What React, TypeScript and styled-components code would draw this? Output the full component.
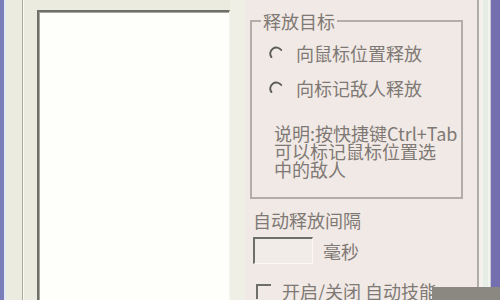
import styled, { createGlobalStyle } from 'styled-components';

const GlobalStyle = createGlobalStyle`
  html, body {
    margin: 0;
    padding: 0;
    background: #f1e9e5;
  }
`;

export default function App() {
  return (
    <>
      <GlobalStyle />
      <Window>
        <FrameLeft />
        <LeftPanel>
          <Ridge />
          <ListBox />
          <ListGap />
        </LeftPanel>
        <RightPanel>
          <GroupBox>
            <Legend>释放目标</Legend>
            <GroupBody>
              <RadioRow>
                <RadioIcon />
                <Label>向鼠标位置释放</Label>
              </RadioRow>
              <RadioRow>
                <RadioIcon />
                <Label>向标记敌人释放</Label>
              </RadioRow>
              <Note>
                说明:按快捷键Ctrl+Tab
                <br />
                可以标记鼠标位置选
                <br />
                中的敌人
              </Note>
            </GroupBody>
          </GroupBox>
          <Caption>自动释放间隔</Caption>
          <IntervalRow>
            <NumberBox />
            <Label>毫秒</Label>
          </IntervalRow>
          <CheckRow>
            <CheckBox />
            <Label>开启/关闭 自动技能</Label>
          </CheckRow>
        </RightPanel>
        <FrameRight />
        <Watermark />
      </Window>
    </>
  );
}

function RadioIcon() {
  return (
    <RadioSvg width="14" height="14" viewBox="0 0 14 14">
      <path
        d="M2.4 11.1 A6 6 0 1 1 12.2 4"
        fill="none"
        stroke="#5c5c58"
        strokeWidth="1.9"
        strokeLinecap="round"
      />
    </RadioSvg>
  );
}

const Window = styled.div`
  position: relative;
  display: flex;
  width: 500px;
  height: 300px;
  overflow: hidden;
  font-family: 'Noto Sans CJK SC', 'Noto Sans', sans-serif;
  font-size: 18px;
  line-height: 18px;
  color: #7f7975;
`;

const FrameLeft = styled.div`
  width: 4px;
  flex: none;
  background: #7a7eb8;
  border-right: 2px solid #e4eaf4;
`;

const LeftPanel = styled.div`
  display: flex;
  width: 239px;
  flex: none;
  background: #ecebdf;
  padding-left: 16px;
  box-sizing: border-box;
`;

const Ridge = styled.div`
  width: 1px;
  flex: none;
  background: #a9a99b;
  border-right: 1px solid #fbfbf4;
  margin-right: 13px;
`;

const ListBox = styled.div`
  width: 193px;
  flex: none;
  margin-top: 10px;
  box-sizing: border-box;
  background: #fefefb;
  border-top: 2px solid #6e6f68;
  border-left: 2px solid #6e6f68;
  border-right: 1px solid #f6f6ee;
  box-shadow: inset 1px 1px 0 #a8a89e;
`;

const ListGap = styled.div`
  flex: 1;
  background: #efefe6;
`;

const RightPanel = styled.div`
  flex: 1;
  display: flex;
  flex-direction: column;
  align-items: flex-start;
  padding: 12px 0 0 5px;
  background: #f1e9e5;
`;

const GroupBox = styled.fieldset`
  margin: 0;
  padding: 0;
  min-width: 0;
  width: 213px;
  height: 198px;
  box-sizing: border-box;
  border: 2px solid #b3aca8;
`;

const Legend = styled.legend`
  margin-left: 9px;
  padding: 0 2px;
  line-height: 18px;
`;

const GroupBody = styled.div`
  display: flex;
  flex-direction: column;
  padding: 14px 0 0 17px;
`;

const RadioRow = styled.div`
  display: flex;
  align-items: center;
  height: 18px;
  margin-bottom: 17px;
`;

const RadioSvg = styled.svg`
  flex: none;
  margin-right: 13px;
`;

const Label = styled.span`
  white-space: nowrap;
`;

const Note = styled.div`
  margin: 10px 0 0 5px;
  white-space: nowrap;
`;

const Caption = styled.div`
  margin-top: 12px;
  padding-left: 3px;
`;

const IntervalRow = styled.div`
  display: flex;
  align-items: center;
  margin-top: 8px;
  padding-left: 3px;
`;

const NumberBox = styled.div`
  width: 60px;
  height: 27px;
  box-sizing: border-box;
  margin-right: 10px;
  background: #f2ece8;
  border-top: 2px solid #6e6e6a;
  border-left: 2px solid #6e6e6a;
  border-right: 1px solid #fbf8f6;
  border-bottom: 1px solid #fbf8f6;
`;

const CheckRow = styled.div`
  display: flex;
  align-items: flex-start;
  margin-top: 18px;
  padding-left: 6px;
`;

const CheckBox = styled.div`
  width: 15px;
  height: 15px;
  flex: none;
  box-sizing: border-box;
  margin: 2px 11px 0 0;
  border-top: 2px solid #6e6e6a;
  border-left: 2px solid #6e6e6a;
`;

const FrameRight = styled.div`
  width: 23px;
  flex: none;
  background: linear-gradient(
    to right,
    #b2aca6 0 2px,
    #f4f1ec 2px 6px,
    #e6ede2 6px 11px,
    #f3f3ee 11px 13px,
    #c9c9d8 13px 14px,
    #7470b0 14px
  );
`;

const Watermark = styled.div`
  position: absolute;
  right: 0;
  bottom: 0;
  width: 68px;
  height: 13px;
  background: #8b8781;
`;
